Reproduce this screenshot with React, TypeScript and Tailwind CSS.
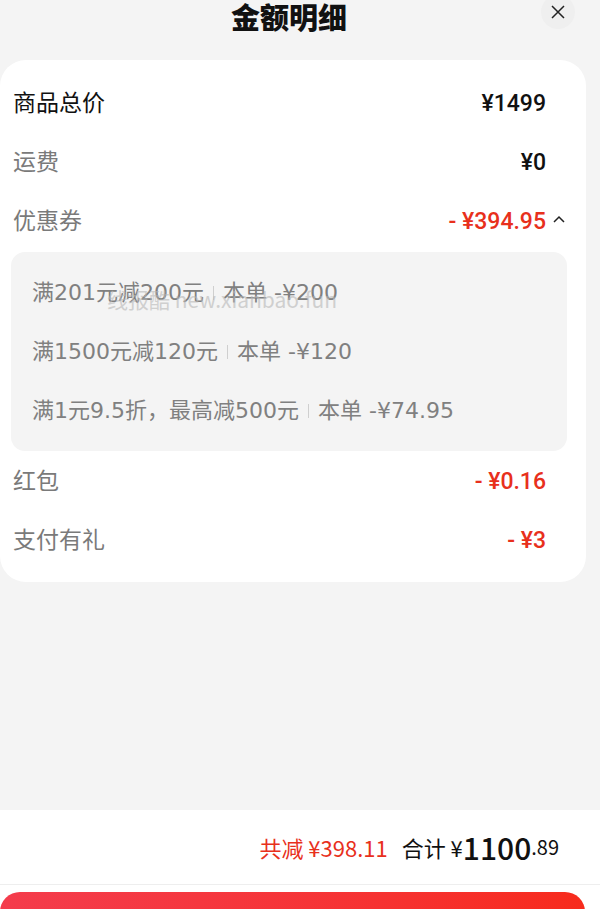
import React from "react";

const font = { fontFamily: '"Noto Sans CJK SC", "Noto Sans", sans-serif' };
const numFont = { fontFamily: 'Roboto, "Noto Sans CJK SC", sans-serif' };
const couponFont = { fontFamily: '"DejaVu Sans", "Noto Sans CJK SC", sans-serif' };

function Row({ label, value, dark, red, caret }: { label: string; value: string; dark?: boolean; red?: boolean; caret?: boolean }) {
  return (
    <div className="relative flex h-[59px] items-baseline justify-between pl-[13px] pr-[40px]">
      <span className={`text-[23px] leading-[57px] ${dark ? "text-[#111]" : "text-[#7a7a7a]"}`}>{label}</span>
      <span className={`text-[23px] font-medium leading-none ${red ? "text-[#e8301c]" : "text-[#111]"}`} style={numFont}>{value}</span>
      {caret && (
        <svg className="absolute right-[20px] top-[23px]" width="14" height="10" viewBox="0 0 14 10" fill="none">
          <path d="M2 8 L7 3 L12 8" stroke="#222" strokeWidth="1.5" />
        </svg>
      )}
    </div>
  );
}

function Coupon({ rule, amount }: { rule: string; amount: string }) {
  return (
    <div className="flex h-[59px] items-center text-[22px] text-[#808080]" style={couponFont}>
      <span>{rule}</span>
      <span className="mx-[9px] h-[14px] w-px bg-[#cfcfcf]"></span>
      <span>本单 -{amount}</span>
    </div>
  );
}

export default function App() {
  return (
    <div className="flex h-[909px] w-[600px] flex-col overflow-hidden bg-[#f4f4f4]" style={font}>
      <div className="relative h-[60px]">
        <div className="flex h-[32px] items-center justify-center pr-[22px] text-[29px] font-black leading-[32px] text-[#111]">金额明细</div>
        <button className="absolute right-[25px] top-[-5px] flex h-[34px] w-[34px] items-center justify-center rounded-full bg-[#efefef]">
          <svg width="16" height="16" viewBox="0 0 16 16" fill="none">
            <path d="M2 2 L14 14 M14 2 L2 14" stroke="#222" strokeWidth="1.5" />
          </svg>
        </button>
      </div>

      <div className="w-[586px] rounded-[26px] bg-white pb-[13px] pt-[13px]">
        <Row label="商品总价" value="¥1499" dark />
        <Row label="运费" value="¥0" />
        <Row label="优惠券" value="- ¥394.95" red caret />
        <div className="relative ml-[11px] mr-[19px] mt-[2px] rounded-[14px] bg-[#f4f4f4] px-[21px] py-[11px]">
          <Coupon rule="满201元减200元" amount="¥200" />
          <Coupon rule="满1500元减120元" amount="¥120" />
          <Coupon rule="满1元9.5折，最高减500元" amount="¥74.95" />
          <span className="absolute left-[96px] top-[32px] text-[21px] text-[#b8b8b8] opacity-60">线报酷 new.xianbao.fun</span>
        </div>
        <Row label="红包" value="- ¥0.16" red />
        <Row label="支付有礼" value="- ¥3" red />
      </div>

      <div className="flex-1"></div>

      <div className="flex h-[75px] items-center justify-end border-b border-[#eeeeee] bg-white pr-[41px]">
        <span className="text-[22px] text-[#e8301c]">共减 ¥398.11</span>
        <span className="ml-[14px] text-[22px] text-[#111]">合计 ¥</span>
        <span className="text-[30px] font-medium text-[#111]">1100</span>
        <span className="text-[20px] text-[#111]">.89</span>
      </div>
      <div className="h-[24px] bg-white pt-[7px]">
        <div className="h-[40px] w-[585px] rounded-[20px] bg-gradient-to-r from-[#f43c4c] to-[#f72b1c]"></div>
      </div>
    </div>
  );
}
